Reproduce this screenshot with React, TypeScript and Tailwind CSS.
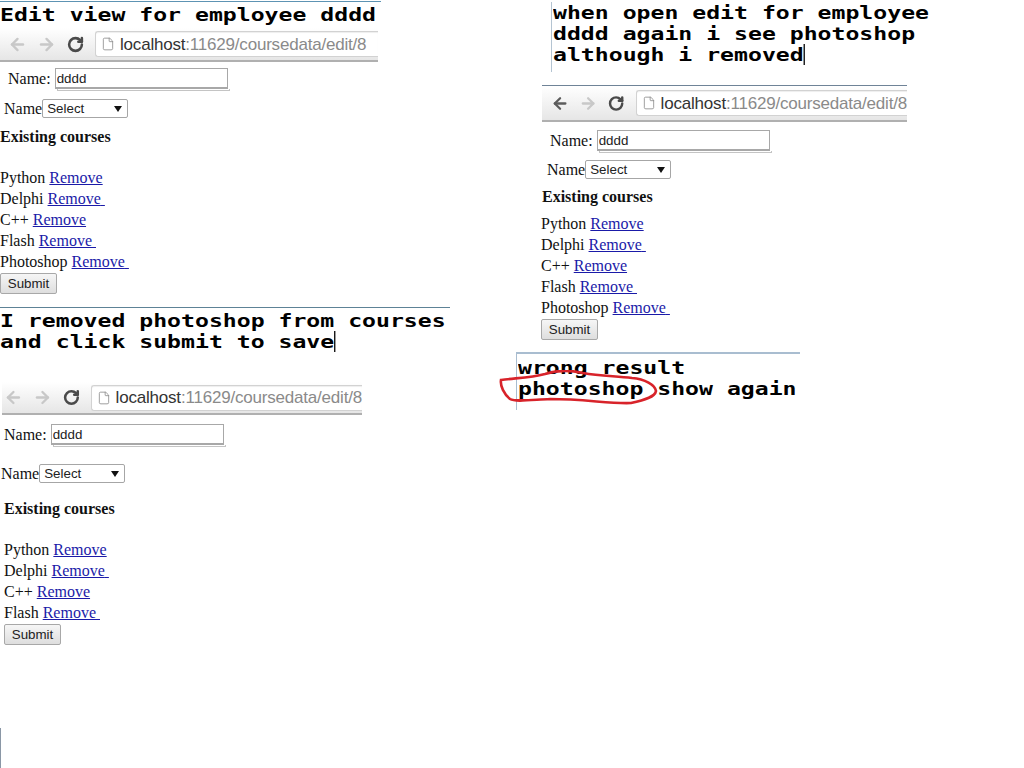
import { ArrowLeft, ArrowRight, RotateCw, File } from "lucide-react";

const courses = ["Python", "Delphi", "C++", "Flash", "Photoshop"];
// the screenshots have a stray underlined space after some links
const trailing = ["Delphi", "Flash", "Photoshop"];

function Caption({ lines, cursor, className }: { lines: string[]; cursor?: boolean; className: string }) {
  return (
    <div className={`font-['DejaVu_Sans_Mono',monospace] text-[18px] leading-[21px] font-bold whitespace-pre text-black ${className}`}>
      {lines.map((line, i) => (
        <div key={line} className="h-[21px] origin-left scale-x-[1.285]">
          {line}
          {cursor && i === lines.length - 1 && <span className="inline-block h-[21px] w-px bg-black align-top" />}
        </div>
      ))}
    </div>
  );
}

function ChromeBar({ className, backActive, pad }: { className: string; backActive?: boolean; pad: string }) {
  return (
    <div className={`flex items-center border-b-2 border-[#b0b0b0] bg-gradient-to-b from-white to-[#e6e6e6] ${pad} ${className}`}>
      <ArrowLeft size={19} strokeWidth={3} className={backActive ? "text-[#5c5c5c]" : "text-[#c8c8c8]"} />
      <ArrowRight size={19} strokeWidth={3} className="ml-[10px] text-[#c8c8c8]" />
      <RotateCw size={17} strokeWidth={3.6} className="ml-[11px] text-[#4a4a4a]" />
      <div className="ml-[11px] flex h-[26px] flex-1 items-center rounded-l-[3px] border border-r-0 border-[#d2d2d2] bg-white pl-[5px] shadow-[inset_0_1px_1px_#eeeeee]">
        <File size={14} strokeWidth={1.4} className="text-[#8a8a8a]" />
        <span className="ml-[5px] font-['Liberation_Sans',sans-serif] text-[17px] leading-none tracking-[-0.2px] whitespace-nowrap text-[#8a8a8a]">
          <span className="text-[#333333]">localhost</span>:11629/coursedata/edit/8
        </span>
      </div>
    </div>
  );
}

function NameRow({ className }: { className: string }) {
  return (
    <div className={`flex items-center ${className}`}>
      <span>Name:</span>
      <div className="relative ml-[4px]">
        <input
          readOnly
          defaultValue="dddd"
          className="block h-[21px] w-[173px] border border-b-2 border-[#a8a8a8] pl-[1px] font-['Liberation_Sans',sans-serif] text-[13.33px] text-[#222222]"
        />
        <div className="absolute top-[21px] left-[2px] h-[2px] w-[173px] border-x border-b border-[#c4c4c4]" />
      </div>
    </div>
  );
}

function SelectRow({ className }: { className: string }) {
  return (
    <div className={`flex items-center ${className}`}>
      <span>Name</span>
      <div className="relative">
        <select className="block h-[19px] w-[86px] appearance-none rounded-[2px] border border-[#a6a6a6] bg-white pl-[4px] font-['Liberation_Sans',sans-serif] text-[13.33px] leading-[17px] text-[#222222]">
          <option>Select</option>
        </select>
        <svg width="8" height="6" viewBox="0 0 8 6" className="absolute top-[7px] left-[72px]">
          <path d="M0 0h8L4 6z" fill="#111111" />
        </svg>
      </div>
    </div>
  );
}

function CourseForm(props: {
  className: string;
  nameRow: string;
  selectRow: string;
  heading: string;
  list: string;
  items: string[];
}) {
  return (
    <div className={`font-['Liberation_Serif',serif] text-[16px] leading-[21px] text-[#111111] ${props.className}`}>
      <NameRow className={props.nameRow} />
      <SelectRow className={props.selectRow} />
      <div className={`font-bold ${props.heading}`}>Existing courses</div>
      <div className={props.list}>
        {props.items.map((c) => (
          <div key={c} className="h-[21px] whitespace-pre">
            {c}{" "}
            <a href="#" className="text-[#1a1aa8] underline">
              Remove{trailing.includes(c) ? " " : ""}
            </a>
          </div>
        ))}
      </div>
      <button className="block h-[21px] w-[57px] rounded-[2px] border border-[#a8a8a8] bg-gradient-to-b from-[#f6f6f6] to-[#dedede] font-['Liberation_Sans',sans-serif] text-[13.33px] leading-[17px] text-[#222222]">
        Submit
      </button>
    </div>
  );
}

export default function App() {
  return (
    <div className="relative h-[768px] w-[1024px] overflow-hidden bg-white">
      {/* edit view */}
      <section className="absolute top-0 left-0 w-[381px]">
        <div className="mt-[1px] h-px bg-[#5d93b3]" />
        <Caption lines={["Edit view for employee dddd"]} className="mt-[2px]" />
        <ChromeBar className="mt-[3px] h-[34px] w-[378px]" pad="pl-[8px]" />
        <CourseForm
          className="pt-[6px]"
          nameRow="ml-[8px]"
          selectRow="mt-[9px] ml-[4px]"
          heading="mt-[7px]"
          list="mt-[20px] mb-[1px]"
          items={courses}
        />
      </section>

      {/* removed photoshop */}
      <section className="absolute top-[307px] left-0 w-[450px]">
        <div className="h-px bg-[#5d8296]" />
        <Caption lines={["I removed photoshop from courses", "and click submit to save"]} cursor className="mt-[2px]" />
        <ChromeBar className="mt-[30px] ml-[2px] h-[33px] w-[360px]" pad="pl-[2px]" />
        <CourseForm
          className="pt-[9px] pl-[4px]"
          nameRow=""
          selectRow="mt-[18px] -ml-[3px]"
          heading="mt-[14px]"
          list="mt-[20px] mb-[1px]"
          items={courses.slice(0, 4)}
        />
      </section>

      {/* open edit again */}
      <section className="absolute top-0 left-[542px] w-[365px]">
        <Caption
          lines={["when open edit for employee", "dddd again i see photoshop", "although i removed"]}
          cursor
          className="mt-[2px] ml-[9px] border-l border-[#b4c4d2] pb-[7px] pl-[1px]"
        />
        <div className="mt-[13px] h-px bg-[#6f8397]" />
        <ChromeBar className="h-[36px]" backActive pad="pl-[9px]" />
        <CourseForm
          className="-ml-[1px] pt-[8px]"
          nameRow="ml-[9px]"
          selectRow="mt-[8px] ml-[6px]"
          heading="mt-[6px] ml-[1px]"
          list="mt-[6px] mb-[1px]"
          items={courses}
        />
      </section>

      {/* wrong result */}
      <section className="absolute top-[352px] left-[516px] w-[284px]">
        <div className="h-[2px] bg-[#a9bdd0]" />
        <Caption lines={["wrong result", "photoshop show again"]} className="border-l border-[#a9bdd0] pt-[3px] pb-[11px] pl-[1px]" />
      </section>

      {/* red marker drawn over the caption */}
      <svg width="170" height="50" viewBox="0 0 170 50" fill="none" className="absolute top-[370px] left-[495px]">
        <path
          d="M6 10C20 8 35 8 50 4C62 0 75 0 88 3C105 6 120 6 137 8C150 9 160 15 161 21C160 27 150 30 136 33C115 34 90 29 55 29C35 30 20 32 15 29C9 24 5 16 6 10Z"
          stroke="#d8232a"
          strokeWidth="2.6"
        />
      </svg>

      {/* leftover window edge */}
      <div className="absolute top-[728px] left-0 h-[40px] w-px bg-[#8a97a6]" />
    </div>
  );
}
